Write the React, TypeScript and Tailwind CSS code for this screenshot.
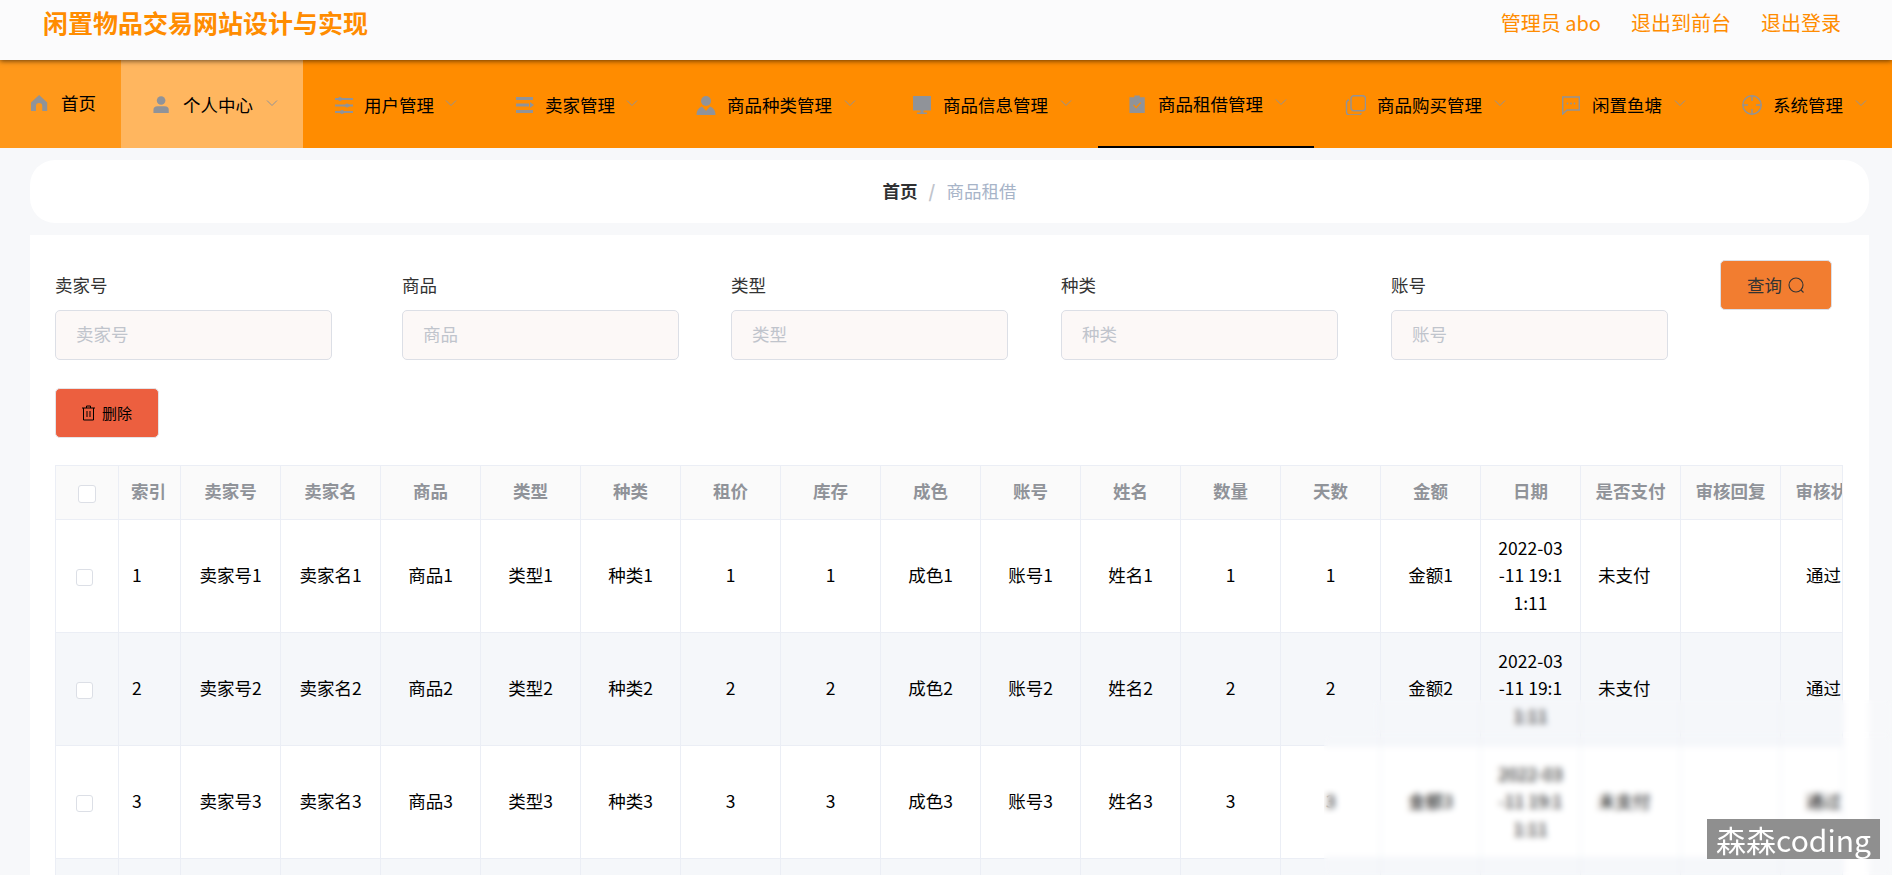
import React from "react";

const G = "#909399";

const Chevron = () => (
  <svg width="12" height="12" viewBox="0 0 12 12" fill="none" stroke={G} strokeWidth="1" className="ml-[1px] shrink-0 -mt-[5px]">
    <path d="M1 3.5 L6 8.5 L11 3.5" />
  </svg>
);

const I = ({ children, w = 20 }: { children: React.ReactNode; w?: number }) => (
  <svg width={w} height="20" viewBox="0 0 20 20" className="shrink-0">
    {children}
  </svg>
);

const icons: Record<string, React.ReactNode> = {
  home: (
    <I w={18}>
      <path fill={G} d="M9 1 L18 9.5 V19 H12.5 V13.5 A3.5 3.5 0 0 0 5.5 13.5 V19 H0 V9.5 Z" />
    </I>
  ),
  user: (
    <I w={18}>
      <circle cx="9" cy="5" r="4.8" fill={G} />
      <path fill={G} d="M0.5 19 V15.5 Q0.5 11.5 5 11.5 H13 Q17.5 11.5 17.5 15.5 V19 Z" />
    </I>
  ),
  op: (
    <I>
      <g fill={G}>
        <rect x="1" y="3" width="18" height="2" />
        <rect x="1" y="9.5" width="18" height="2" />
        <rect x="1" y="16" width="18" height="2" />
        <circle cx="6" cy="4" r="2" />
        <circle cx="13" cy="10.5" r="2" />
        <circle cx="8" cy="17" r="2" />
      </g>
    </I>
  ),
  fold: (
    <I>
      <g fill={G}>
        <rect x="1" y="2" width="17" height="3" />
        <rect x="1" y="8.5" width="13" height="3" />
        <rect x="1" y="15" width="17" height="3" />
        <path d="M15 7 L19 10 L15 13 Z" />
      </g>
    </I>
  ),
  person: (
    <I>
      <circle cx="10" cy="6" r="5" fill={G} />
      <path fill={G} d="M6 11.5 L10 16 L14 11.5 Q19.5 13.5 19.5 20 H0.5 Q0.5 13.5 6 11.5 Z" />
    </I>
  ),
  screen: (
    <I>
      <path fill={G} d="M1 1 H19 V15.5 H1 Z M8.5 15.5 H11.5 V17.5 H15 V19 H5 V17.5 H8.5 Z" />
    </I>
  ),
  order: (
    <I w={18}>
      <path fill={G} d="M6 0.5 H12 V2.5 H17.5 V20 H0.5 V2.5 H6 Z" />
      <path d="M5 11 L8 14 L13 8.5" fill="none" stroke="#ff8c00" strokeWidth="1.3" />
    </I>
  ),
  copy: (
    <I w={21}>
      <rect x="5.5" y="0.7" width="14.5" height="15" rx="3" fill="none" stroke={G} strokeWidth="1.4" />
      <path d="M3.5 5 Q1 5.5 1 8 V17 Q1 20 4 20 H13 Q15 20 15.8 18" fill="none" stroke={G} strokeWidth="1.4" />
    </I>
  ),
  chat: (
    <I>
      <path d="M1.7 2 H18.3 V15 H6 L1.7 19 Z" fill="none" stroke={G} strokeWidth="1.4" />
      <circle cx="6.5" cy="8.5" r="0.9" fill={G} />
      <circle cx="10" cy="8.5" r="0.9" fill={G} />
      <circle cx="13.5" cy="8.5" r="0.9" fill={G} />
    </I>
  ),
  aim: (
    <I>
      <circle cx="10" cy="10" r="9.2" fill="none" stroke={G} strokeWidth="1.4" />
      <path d="M10 1 V6 M10 14 V19 M1 10 H6 M14 10 H19" stroke={G} strokeWidth="1.4" />
    </I>
  ),
};

const nav = [
  { t: "用户管理", i: "op", w: "w-[181px]", g: "gap-[10px]" },
  { t: "卖家管理", i: "fold", w: "w-[181px]", g: "gap-[10px]" },
  { t: "商品种类管理", i: "person", w: "w-[216px]", g: "gap-[11px]" },
  { t: "商品信息管理", i: "screen", w: "w-[217px]", g: "gap-[11px]" },
  { t: "商品租借管理", i: "order", w: "w-[216px]", g: "gap-[11px]", active: true },
  { t: "商品购买管理", i: "copy", w: "w-[216px]", g: "gap-[11px]" },
  { t: "闲置鱼塘", i: "chat", w: "w-[181px]", g: "gap-[11px]" },
  { t: "系统管理", i: "aim", w: "w-[181px]", g: "gap-[11px]" },
];

const fields = [
  { n: "卖家号", c: "w-[277px] mr-[18px]" },
  { n: "商品", c: "w-[277px]" },
  { n: "类型", c: "w-[277px] mr-[1px]" },
  { n: "种类", c: "w-[277px] mr-[1px]" },
  { n: "账号", c: "w-[277px]" },
];

const heads = ["卖家号", "卖家名", "商品", "类型", "种类", "租价", "库存", "成色", "账号", "姓名", "数量", "天数", "金额", "日期", "是否支付", "审核回复", "审核状态"];

const td = "border-r border-b border-[#ebeef5] text-center align-middle overflow-hidden pb-[2px]";
const th = "border-r border-b border-[#ebeef5] text-center font-bold text-[#909399] bg-[#fafafa] whitespace-nowrap overflow-hidden pb-[2px]";

const Box = ({ s }: { s: string }) => <span className={`inline-block bg-white border border-[#dcdfe6] rounded-[3px] align-middle ${s}`} />;

export default function App() {
  return (
    <div className="relative h-[875px] overflow-hidden bg-[#f7f8fa] text-[17.5px] text-black font-['Noto_Sans_CJK_SC','Microsoft_YaHei',sans-serif]">
      <header className="relative z-10 h-[60px] bg-[#fbfbfc] shadow-[0_1px_5px_rgba(0,0,0,0.6)] flex justify-between items-start pt-[6px] pl-[43px] pr-[51px] text-[#ff8c00]">
        <div className="text-[25px] font-bold leading-[32px] w-[340px]">闲置物品交易网站设计与实现</div>
        <div className="flex gap-[30px] text-[20px] leading-[30px] mt-[2px]">
          <span>管理员 abo</span>
          <span>退出到前台</span>
          <span>退出登录</span>
        </div>
      </header>

      <nav className="h-[88px] bg-[#ff8c00] flex">
        <div className="w-[121px] bg-[#ff981a] flex items-center pl-[31px] gap-[12px] pb-[2px]">
          {icons.home}
          <span>首页</span>
        </div>
        <div className="w-[182px] bg-[#ffb65f] flex items-center pl-[32px] gap-[12px] pt-[2px]">
          {icons.user}
          <span>个人中心</span>
          <Chevron />
        </div>
        {nav.map((n) => (
          <div key={n.t} className={`${n.w} ${n.g} flex items-center pl-[31px] pt-[2px] ${n.active ? "border-b-[2px] border-black" : ""}`}>
            {icons[n.i]}
            <span className="whitespace-nowrap">{n.t}</span>
            <Chevron />
          </div>
        ))}
      </nav>

      <div className="mx-[30px] w-[1839px]">
        <div className="mt-[12px] h-[63px] bg-white rounded-[25px] flex items-center justify-center text-[17.5px]">
          <span className="font-bold text-[#303133]">首页</span>
          <span className="mx-[11px] text-[#c0c4cc] font-bold">/</span>
          <span className="text-[#a7b4c8]">商品租借</span>
        </div>

        <div className="mt-[12px] h-[640px] bg-white pl-[25px] pr-[26px] pt-[26px]">
          <div className="flex items-start">
            <div className="flex gap-[52px] pt-[12px]">
              {fields.map((f) => (
                <div key={f.n} className={f.c}>
                  <div className="h-[24px] leading-[24px] text-[#333333]">{f.n}</div>
                  <input
                    readOnly
                    placeholder={f.n}
                    className="mt-[13px] block w-full h-[50px] bg-[#fcf8f7] border border-[#dcdfe6] rounded-[5px] pl-[20px] pb-[3px] text-[17.5px] outline-none placeholder:text-[#c0c4cc]"
                  />
                </div>
              ))}
            </div>
            <button className="ml-[52px] -mt-[1px] w-[112px] h-[50px] bg-[#f27d30] border border-[#dcdfe6] rounded-[5px] text-[#333333] flex items-center justify-center gap-[6px]">
              <span>查询</span>
              <svg width="17" height="17" viewBox="0 0 17 17" fill="none" stroke="#333333" strokeWidth="1.1">
                <circle cx="8" cy="8" r="7" />
                <path d="M13 13 L15.5 15.5" />
              </svg>
            </button>
          </div>

          <button className="mt-[28px] w-[104px] h-[50px] bg-[#ec5f3f] border border-[#e4e4e8] rounded-[5px] text-[15px] flex items-center justify-center gap-[7px]">
            <svg width="13" height="16" viewBox="0 0 13 16" fill="none" stroke="#000" strokeWidth="1">
              <path d="M0 3 H13 M4.5 3 V1 H8.5 V3 M1.5 3 V15 H11.5 V3 M5 6 V12 M8 6 V12" />
            </svg>
            <span>删除</span>
          </button>

          <div className="mt-[27px] w-[1788px] overflow-hidden border-r border-[#ebeef5]">
            <table className="table-fixed w-[1825px] border-separate border-spacing-0 border-l border-t border-[#ebeef5]">
              <colgroup>
                <col className="w-[63px]" />
                <col className="w-[62px]" />
                {heads.map((h) => (
                  <col key={h} className="w-[100px]" />
                ))}
              </colgroup>
              <thead>
                <tr className="h-[54px]">
                  <th className={th}>
                    <Box s="w-[18px] h-[18px] -ml-[1px]" />
                  </th>
                  <th className={`${th} text-left pl-[12px]`}>索引</th>
                  {heads.map((h) => (
                    <th key={h} className={th}>
                      {h}
                    </th>
                  ))}
                </tr>
              </thead>
              <tbody>
                {[1, 2, 3, 4].map((i) => (
                  <tr key={i} className={`h-[113px] ${i % 2 === 0 ? "bg-[#f5f7fa]" : "bg-white"}`}>
                    <td className={td}>
                      <Box s="w-[17px] h-[17px] -ml-[5px]" />
                    </td>
                    <td className={`${td} text-left pl-[13px]`}>{i}</td>
                    {["卖家号", "卖家名", "商品", "类型", "种类"].map((k) => (
                      <td key={k} className={td}>
                        {k}
                        {i}
                      </td>
                    ))}
                    <td className={td}>{i}</td>
                    <td className={td}>{i}</td>
                    <td className={td}>成色{i}</td>
                    <td className={td}>账号{i}</td>
                    <td className={td}>姓名{i}</td>
                    <td className={td}>{i}</td>
                    <td className={td}>{i}</td>
                    <td className={td}>金额{i}</td>
                    <td className={`${td} leading-[27.5px] whitespace-nowrap`}>
                      2022-03
                      <br />
                      -11 19:1
                      <br />
                      1:11
                    </td>
                    <td className={`${td} text-left pl-[17px]`}>未支付</td>
                    <td className={td}></td>
                    <td className={`${td} text-left pl-[25px]`}>通过</td>
                  </tr>
                ))}
              </tbody>
            </table>
          </div>
        </div>
      </div>

      <div className="absolute left-[1372px] top-[700px] right-0 h-[35px] backdrop-blur-[3px]" />
      <div className="absolute left-[1324px] top-[735px] right-0 bottom-0 backdrop-blur-[3px]" />
      <div className="absolute left-[1707px] top-[819px] w-[173px] h-[40px] bg-[#8f8f8f] text-white text-[30px] leading-[40px] text-center whitespace-nowrap font-['Noto_Sans_CJK_SC',sans-serif]">
        森森coding
      </div>
    </div>
  );
}
